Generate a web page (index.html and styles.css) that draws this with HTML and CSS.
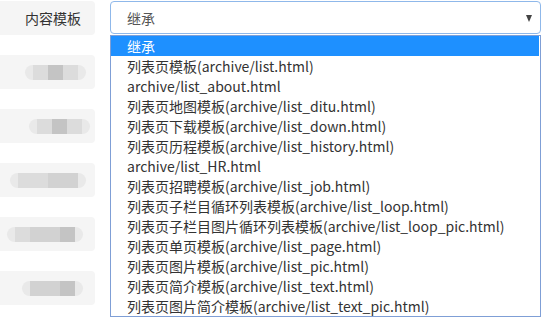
FILE: index.html
```html
<!DOCTYPE html>
<html lang="zh-CN">
<head>
<meta charset="utf-8">
<link rel="stylesheet" href="styles.css">
</head>
<body>
<div class="page">
  <div class="labels">
    <div class="label-cell"><span class="label-text">内容模板</span></div>
    <div class="label-cell"><span class="blur pill-a"><i class="b1"></i><i class="b3"></i><i class="b1"></i></span></div>
    <div class="label-cell"><span class="blur pill-b"><i class="b1"></i><i class="b3"></i><i class="b1"></i></span></div>
    <div class="label-cell"><span class="blur pill-c"><i class="b1"></i><i class="b1"></i><i class="b2"></i><i class="b2"></i></span></div>
    <div class="label-cell"><span class="blur pill-d"><i class="b1"></i><i class="b2"></i><i class="b2"></i><i class="b3"></i></span></div>
    <div class="label-cell"><span class="blur pill-e"><i class="b2"></i><i class="b2"></i><i class="b3"></i></span></div>
  </div>
  <div class="field">
    <div class="select">
      <span class="select-value">继承</span>
      <span class="arrow"></span>
    </div>
    <ul class="options">
      <li class="selected">继承</li>
      <li>列表页模板(archive/list.html)</li>
      <li>archive/list_about.html</li>
      <li>列表页地图模板(archive/list_ditu.html)</li>
      <li>列表页下载模板(archive/list_down.html)</li>
      <li>列表页历程模板(archive/list_history.html)</li>
      <li>archive/list_HR.html</li>
      <li>列表页招聘模板(archive/list_job.html)</li>
      <li>列表页子栏目循环列表模板(archive/list_loop.html)</li>
      <li>列表页子栏目图片循环列表模板(archive/list_loop_pic.html)</li>
      <li>列表页单页模板(archive/list_page.html)</li>
      <li>列表页图片模板(archive/list_pic.html)</li>
      <li>列表页简介模板(archive/list_text.html)</li>
      <li>列表页图片简介模板(archive/list_text_pic.html)</li>
    </ul>
  </div>
</div>
</body>
</html>
```
FILE: styles.css
```css
* { box-sizing: border-box; }
html, body { margin: 0; padding: 0; background: #fff; }
body {
  font-family: "Noto Sans CJK SC", "Noto Sans", sans-serif;
  font-size: 14px;
  color: #333;
  overflow: hidden;
}
.page {
  display: flex;
  gap: 15px;
  padding-top: 1px;
  width: 543px;
  height: 318px;
}
.labels {
  width: 95px;
  display: flex;
  flex-direction: column;
  gap: 20px;
}
.label-cell {
  height: 34px;
  background: #f5f5f5;
  border-radius: 0 4px 4px 0;
  display: flex;
  align-items: center;
  justify-content: flex-end;
  padding-right: 14px;
  position: relative;
}
.label-text { color: #333; font-size: 14px; }
.blur {
  display: flex;
  height: 15px;
  border-radius: 8px;
  background: #e9e9e9;
  overflow: hidden;
  padding: 0 8px;
}
.blur i { display: block; width: 15px; height: 15px; }
.blur .b1 { background: #dcdcdc; }
.blur .b2 { background: #d2d2d2; }
.blur .b3 { background: #c4c4c4; }
.pill-a { margin-right: -5px; }
.pill-b { margin-right: -9px; }
.pill-c { margin-right: -5px; }
.pill-d { margin-right: -2px; }
.pill-e { margin-right: -2px; }
.field {
  width: 431px;
  display: flex;
  flex-direction: column;
}
.select {
  height: 33px;
  border: 1px solid #8fb8ea;
  border-radius: 4px;
  display: flex;
  align-items: center;
  padding: 0 8px 0 16px;
  background: #fff;
}
.select-value { flex: 1; color: #555; }
.arrow {
  width: 0; height: 0;
  border-left: 3.5px solid transparent;
  border-right: 3.5px solid transparent;
  border-top: 7px solid #444;
  margin-top: 1px;
}
.options {
  list-style: none;
  margin: 1px 0 0 0;
  padding: 0;
  border: 1px solid #7f9fd6;
  width: 431px;
  height: 282px;
}
.options li {
  height: 20px;
  line-height: 20px;
  padding-left: 16px;
  white-space: nowrap;
  color: #333;
}
.options li.selected { background: #1e90ff; color: #fff; margin-right: 1px; }
```
